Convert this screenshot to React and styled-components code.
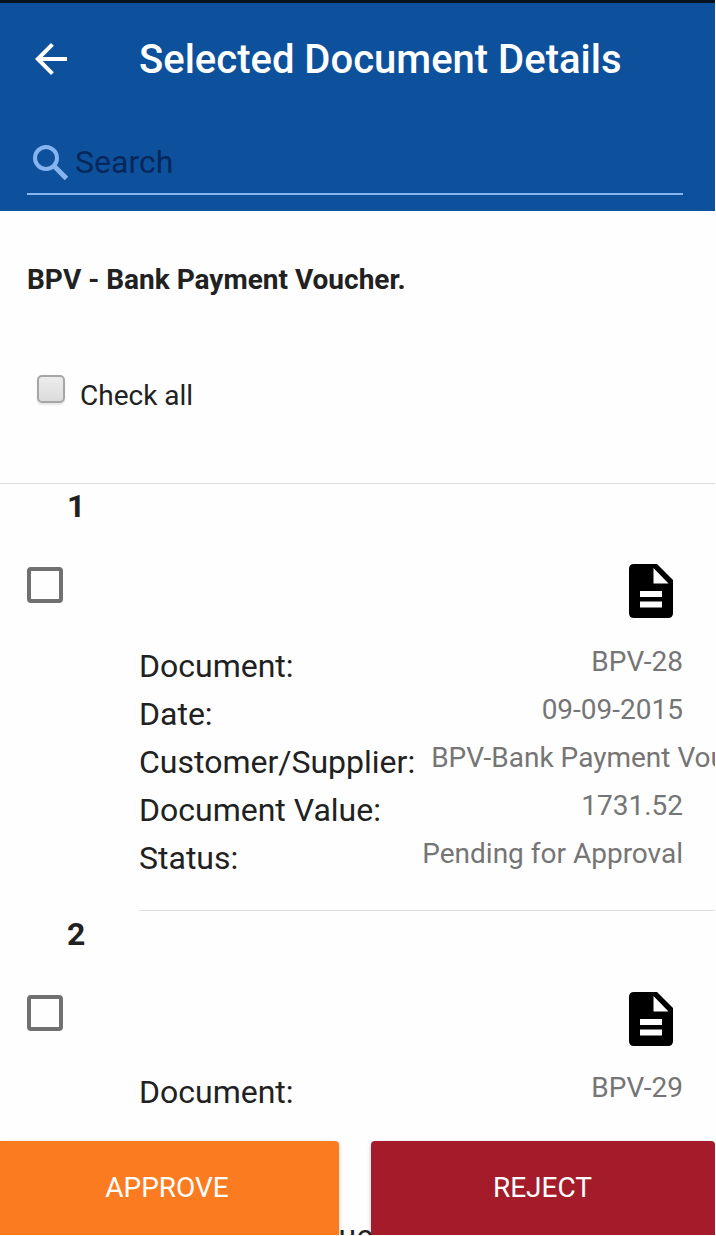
import { useState } from "react";
import styled, { createGlobalStyle } from "styled-components";
import { MdArrowBack } from "react-icons/md";

const documents = [
  {
    id: 1,
    fields: [
      { name: "Document:", value: "BPV-28" },
      { name: "Date:", value: "09-09-2015" },
      { name: "Customer/Supplier:", value: "BPV-Bank Payment Voucher" },
      { name: "Document Value:", value: "1731.52" },
      { name: "Status:", value: "Pending for Approval" },
    ],
  },
  {
    id: 2,
    fields: [
      { name: "Document:", value: "BPV-29" },
      { name: "Document Value:", gap: 96 },
    ],
  },
];

const GlobalStyle = createGlobalStyle`
  * {
    box-sizing: border-box;
  }

  body {
    margin: 0;
    overflow: hidden;
    background: #fefefe;
    color: #212121;
    font-family: Roboto, "Liberation Sans", sans-serif;
  }

  button,
  input {
    font-family: inherit;
  }
`;

const Screen = styled.div`
  position: relative;
  width: 715px;
  height: 1235px;
  overflow: hidden;
`;

const Header = styled.header`
  height: 211px;
  padding: 0 32px 0 27px;
  border-top: 3px solid #08131f;
  background: #0d519d;
`;

const TitleBar = styled.div`
  display: flex;
  align-items: center;
  height: 112px;
  color: #fff;
`;

const BackButton = styled.button`
  display: flex;
  width: 112px;
  padding: 0;
  border: 0;
  background: none;
  color: inherit;

  svg {
    width: 48px;
    height: 48px;
  }
`;

const Title = styled.h1`
  margin: 0;
  padding-top: 2px;
  font-size: 40px;
  font-weight: 500;
  line-height: 48px;
  white-space: nowrap;
`;

const SearchField = styled.label`
  display: flex;
  align-items: center;
  height: 80px;
  padding: 26px 0 10px 5px;
  border-bottom: 2px solid #86b4ee;
  color: #86b4ee;

  svg {
    flex: none;
    width: 36px;
    height: 36px;
  }
`;

const SearchInput = styled.input`
  width: 500px;
  margin-left: 7px;
  padding: 0;
  border: 0;
  outline: 0;
  background: none;
  color: #06275b;
  font-size: 32px;

  &::placeholder {
    color: #06275b;
    opacity: 1;
  }
`;

const Summary = styled.section`
  height: 273px;
  padding: 48px 27px 0;
  border-bottom: 1px solid #dedede;
`;

const VoucherTitle = styled.h2`
  margin: 0;
  font-size: 28px;
  font-weight: 700;
  line-height: 42px;
`;

const CheckAllLabel = styled.label`
  display: flex;
  align-items: flex-start;
  margin-top: 73px;
  padding-left: 10px;
  font-size: 28px;
  line-height: 44px;
`;

const NativeCheckbox = styled.input`
  appearance: none;
  width: 28px;
  height: 28px;
  margin: 1px 15px 0 0;
  border: 2px solid #a6a6a6;
  border-radius: 5px;
  background: linear-gradient(#ededed, #dcdcdc);
  box-shadow: 0 2px 2px rgba(0, 0, 0, 0.1);
`;

const Item = styled.article`
  height: 428px;
`;

const ItemNumber = styled.div`
  height: 46px;
  padding-left: 67px;
  font-size: 32px;
  font-weight: 700;
  line-height: 44px;
`;

const ItemTop = styled.div`
  display: flex;
  justify-content: space-between;
  align-items: flex-start;
  height: ${({ $height }) => $height}px;
  padding: 34px 42px 0 27px;
`;

const Checkbox = styled.input`
  appearance: none;
  width: 36px;
  height: 36px;
  margin: 3px 0 0;
  border: 4px solid #707070;
  border-radius: 4px;
`;

const DocumentSvg = styled.svg`
  width: 44px;
  height: 54px;
`;

const Fields = styled.dl`
  height: 269px;
  margin: 0 0 0 139px;
  padding-right: 32px;
  border-bottom: ${({ $last }) => ($last ? "0" : "1px solid #dedede")};
`;

const Field = styled.div`
  display: flex;
  justify-content: space-between;
  align-items: flex-start;
  height: 48px;
  margin-top: ${({ $gap }) => $gap || 0}px;
  white-space: nowrap;
`;

const FieldName = styled.dt`
  font-size: 32px;
  line-height: 48px;
`;

const FieldValue = styled.dd`
  margin: 0 0 0 16px;
  color: #757575;
  font-size: 28px;
  line-height: 39px;
`;

const ActionBar = styled.footer`
  position: absolute;
  right: 0;
  bottom: 0;
  left: 0;
  display: flex;
  justify-content: space-between;
`;

const ActionButton = styled.button`
  width: ${({ $width }) => $width}px;
  height: 94px;
  padding: ${({ $padding }) => $padding};
  border: 0;
  border-radius: ${({ $radius }) => $radius};
  background: ${({ $color }) => $color};
  box-shadow: 0 2px 4px rgba(0, 0, 0, 0.22);
  color: #fff;
  font-size: 28px;
`;

function SearchIcon() {
  return (
    <svg viewBox="0 0 36 36" fill="none" stroke="currentColor" strokeWidth="4">
      <circle cx="14" cy="14" r="11" />
      <path d="M22 22 L34.500 34.500" strokeWidth="5" />
    </svg>
  );
}

function DocumentIcon() {
  return (
    <DocumentSvg viewBox="0 0 44 54">
      <path
        fill="#000"
        fillRule="evenodd"
        d="M5 0H28L44 16V49Q44 54 39 54H5Q0 54 0 49V5Q0 0 5 0ZM24.500 4V19.500H39.500ZM11 27V33H33V27ZM11 37.500V43.500H33V37.500Z"
      />
    </DocumentSvg>
  );
}

function DocumentItem({ item, checked, onToggle, last }) {
  return (
    <Item>
      <ItemNumber>{item.id}</ItemNumber>
      {/* the last item sits a little tighter to its fields */}
      <ItemTop $height={last ? 110 : 112}>
        <Checkbox type="checkbox" checked={checked} onChange={onToggle} />
        <DocumentIcon />
      </ItemTop>
      <Fields $last={last}>
        {item.fields.map(({ name, value, gap }) => (
          <Field key={name} $gap={gap}>
            <FieldName>{name}</FieldName>
            {value && <FieldValue>{value}</FieldValue>}
          </Field>
        ))}
      </Fields>
    </Item>
  );
}

export default function App() {
  const [search, setSearch] = useState("");
  const [selected, setSelected] = useState([]);

  const toggle = (id) => {
    setSelected((prev) =>
      prev.includes(id) ? prev.filter((x) => x !== id) : [...prev, id]
    );
  };

  const toggleAll = (e) => {
    setSelected(e.target.checked ? documents.map((d) => d.id) : []);
  };

  return (
    <>
      <GlobalStyle />
      <Screen>
        <Header>
          <TitleBar>
            <BackButton aria-label="Back">
              <MdArrowBack />
            </BackButton>
            <Title>Selected Document Details</Title>
          </TitleBar>
          <SearchField>
            <SearchIcon />
            <SearchInput
              placeholder="Search"
              value={search}
              onChange={(e) => setSearch(e.target.value)}
            />
          </SearchField>
        </Header>
        <Summary>
          <VoucherTitle>BPV - Bank Payment Voucher.</VoucherTitle>
          <CheckAllLabel>
            <NativeCheckbox
              type="checkbox"
              checked={selected.length === documents.length}
              onChange={toggleAll}
            />
            Check all
          </CheckAllLabel>
        </Summary>
        {documents.map((item, i) => (
          <DocumentItem
            key={item.id}
            item={item}
            checked={selected.includes(item.id)}
            onToggle={() => toggle(item.id)}
            last={i === documents.length - 1}
          />
        ))}
        <ActionBar>
          <ActionButton
            $width={339}
            $color="#fb7c20"
            $radius="0 4px 0 0"
            $padding="0 5px 2px 0"
          >
            APPROVE
          </ActionButton>
          <ActionButton
            $width={344}
            $color="#a41b29"
            $radius="4px 4px 0 0"
            $padding="0 1px 2px 0"
          >
            REJECT
          </ActionButton>
        </ActionBar>
      </Screen>
    </>
  );
}
